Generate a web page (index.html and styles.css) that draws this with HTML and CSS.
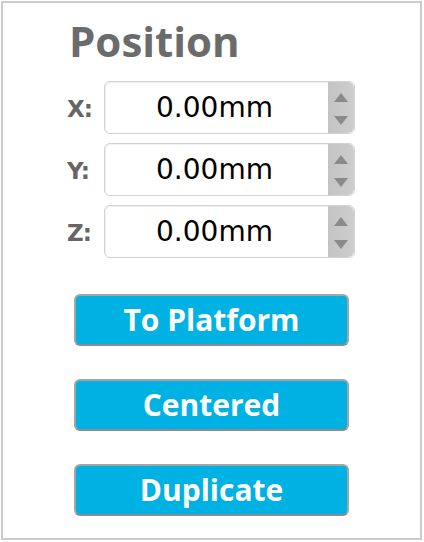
FILE: index.html
```html
<!DOCTYPE html>
<html>
<head>
<meta charset="utf-8">
<link rel="stylesheet" href="styles.css">
</head>
<body>
<div class="panel">
  <h1 class="title">Position</h1>
  <div class="fields">
    <div class="row">
      <span class="label">X:</span>
      <div class="input"><span class="value">0.00mm</span><div class="spin"><span class="up"></span><span class="down"></span></div></div>
    </div>
    <div class="row">
      <span class="label">Y:</span>
      <div class="input"><span class="value">0.00mm</span><div class="spin"><span class="up"></span><span class="down"></span></div></div>
    </div>
    <div class="row">
      <span class="label">Z:</span>
      <div class="input"><span class="value">0.00mm</span><div class="spin"><span class="up"></span><span class="down"></span></div></div>
    </div>
  </div>
  <div class="buttons">
    <button class="btn">To Platform</button>
    <button class="btn">Centered</button>
    <button class="btn">Duplicate</button>
  </div>
</div>
</body>
</html>
```
FILE: styles.css
```css
html, body { margin: 0; padding: 0; background: #fff; }
body { width: 424px; height: 542px; overflow: hidden; }
.panel {
  margin: 1px 0 0 1px;
  width: 417px;
  height: 535px;
  border: 2px solid #cccccc;
  display: flex;
  flex-direction: column;
  font-family: "Open Sans", sans-serif;
}
.title {
  margin: 12px 0 0 66px;
  font-size: 42px;
  line-height: 52px;
  font-weight: 700;
  color: #6b6b6b;
}
.fields {
  margin-top: 14px;
  display: flex;
  flex-direction: column;
  gap: 9px;
}
.row {
  display: flex;
  align-items: baseline;
  padding-left: 64px;
}
.label {
  width: 37px;
  font-family: "DejaVu Sans", sans-serif;
  font-size: 23px;
  line-height: 24px;
  font-weight: 700;
  color: #666;
  letter-spacing: -1px;
}
.input {
  width: 249px;
  height: 51px;
  border: 1px solid #d2d2d2;
  border-radius: 6px;
  display: flex;
  box-shadow: inset 1px 1px 1px rgba(0,0,0,0.06);
  overflow: hidden;
}
.value {
  flex: 1;
  text-align: center;
  font-family: "DejaVu Sans", sans-serif;
  font-size: 28px;
  line-height: 51px;
  color: #000;
  padding-right: 4px;
}
.spin {
  width: 26px;
  background: linear-gradient(to right, #c4c4c4, #cdcdcd);
  border-radius: 0 6px 6px 0;
  display: flex;
  flex-direction: column;
  align-items: center;
  padding-top: 11px;
  gap: 14px;
}
.up {
  width: 0; height: 0;
  border-left: 7px solid transparent;
  border-right: 7px solid transparent;
  border-bottom: 9px solid #8a8a8a;
}
.down {
  width: 0; height: 0;
  border-left: 7px solid transparent;
  border-right: 7px solid transparent;
  border-top: 9px solid #8a8a8a;
}
.buttons {
  margin-top: 36px;
  display: flex;
  flex-direction: column;
  align-items: center;
  gap: 33px;
}
.btn {
  width: 275px;
  height: 52px;
  border: 2px solid #a5a5a5;
  border-bottom-color: #8c8c8c;
  border-radius: 6px;
  background: #00b1e4;
  color: #fff;
  font-family: "Open Sans", sans-serif;
  font-weight: 700;
  font-size: 30px;
  line-height: 46px;
  padding: 0;
}
```
